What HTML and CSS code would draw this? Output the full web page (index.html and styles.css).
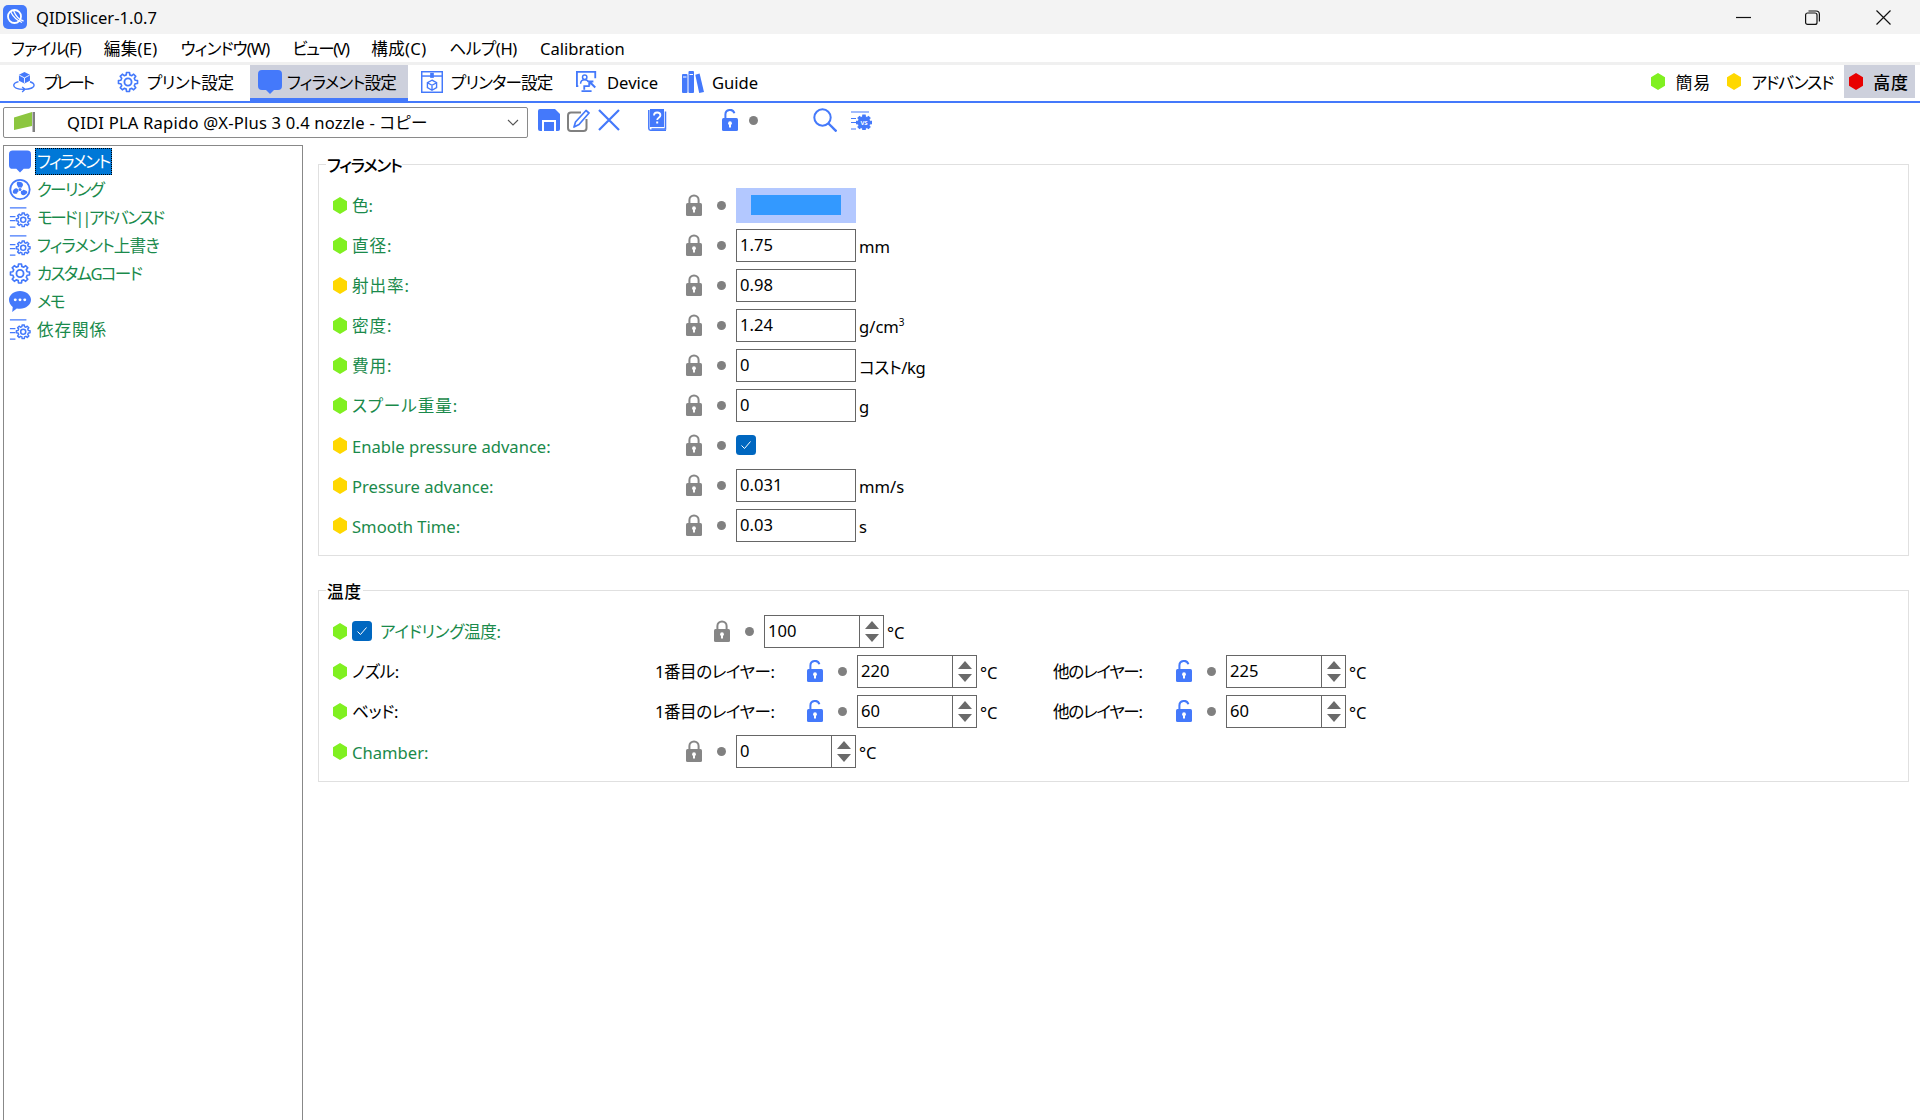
FILE: index.html
```html
<!DOCTYPE html>
<html>
<head>
    <meta charset="utf-8">
    <title>QIDISlicer-1.0.7</title>
    <link rel="stylesheet" href="styles.css">
</head>
<body>
<svg class="sprite" xmlns="http://www.w3.org/2000/svg">
    <defs>
        <polygon id="gear-shape" points="-1.94,-7.76 -1.64,-10.37 1.64,-10.37 1.94,-7.76 4.12,-6.86 6.17,-8.49 8.49,-6.17 6.86,-4.12 7.76,-1.94 10.37,-1.64 10.37,1.64 7.76,1.94 6.86,4.12 8.49,6.17 6.17,8.49 4.12,6.86 1.94,7.76 1.64,10.37 -1.64,10.37 -1.94,7.76 -4.12,6.86 -6.17,8.49 -8.49,6.17 -6.86,4.12 -7.76,1.94 -10.37,1.64 -10.37,-1.64 -7.76,-1.94 -6.86,-4.12 -8.49,-6.17 -6.17,-8.49 -4.12,-6.86"/>
    </defs>
    <symbol id="hex" viewBox="0 0 14 17"><polygon points="7,0 14,4.3 14,12.7 7,17 0,12.7 0,4.3"/></symbol>
    <symbol id="lock" viewBox="0 0 16 22">
        <path d="M3.4 10V6a4.6 4.6 0 0 1 9.2 0v4" fill="none" stroke="currentColor" stroke-width="2"/>
        <rect y="9" width="16" height="13" rx="1.5" fill="currentColor"/>
        <circle cx="8" cy="14.2" r="1.9" fill="#fff"/><rect x="7" y="14.5" width="2" height="4" fill="#fff"/>
    </symbol>
    <symbol id="unlock" viewBox="0 0 16 22">
        <path d="M3.4 10V5.6a4.6 4.6 0 0 1 9-1.4" fill="none" stroke="currentColor" stroke-width="2"/>
        <rect y="9" width="16" height="13" rx="1.5" fill="currentColor"/>
        <circle cx="8" cy="14.2" r="1.9" fill="#fff"/><rect x="7" y="14.5" width="2" height="4" fill="#fff"/>
    </symbol>
    <symbol id="gear" viewBox="-12 -12 24 24">
        <use href="#gear-shape" fill="none" stroke="currentColor" stroke-width="1.8" stroke-linejoin="round"/>
        <circle r="3.9" fill="none" stroke="currentColor" stroke-width="2"/>
    </symbol>
    <symbol id="mode" viewBox="0 0 24 24">
        <path d="M1 1.5h18M1 11h6M1 15.5h6M1 22.5h6" fill="none" stroke="currentColor" stroke-width="1.4"/>
        <g transform="translate(15.5 14.5) scale(.72)">
            <use href="#gear-shape" fill="none" stroke="currentColor" stroke-width="2.2" stroke-linejoin="round"/>
            <circle r="3.8" fill="none" stroke="currentColor" stroke-width="2.4"/>
        </g>
    </symbol>
    <symbol id="bubble" viewBox="0 0 24 24">
        <path d="M4 0h16a4 4 0 0 1 4 4v12a4 4 0 0 1-4 4h-4l-4 4-4-4H4a4 4 0 0 1-4-4V4a4 4 0 0 1 4-4z" fill="currentColor"/>
    </symbol>
    <symbol id="fan" viewBox="0 0 22 22">
        <circle cx="11" cy="11" r="9.7" fill="none" stroke="currentColor" stroke-width="1.8"/>
        <circle cx="11" cy="11" r="1.5" fill="currentColor"/>
        <path d="M8 3.8c2.500-1.200 6 0 6 2.400 0 1.500-1.200 2.300-1.800 3.200-.8-.6-1.800-.6-2.500-.1C8.800 8 7 6 8 3.800zM3.800 14.200c-.3-2.800 2-5.400 4.200-4.300 1.200.6 1.300 2 1.600 3-.9.400-1.400 1.200-1.500 2.100-1.500.2-3.200.6-4.300-.8zM18.400 13.800c-1 2.600-4.400 3.900-6 2-.9-1-.5-2.300-.4-3.300 1 0 1.800-.5 2.200-1.300 1.400.5 3.700.4 4.200 2.600z" fill="currentColor"/>
    </symbol>
    <symbol id="memo" viewBox="0 0 24 24">
        <path d="M12 .5c6.600 0 12 4.300 12 9.700s-5.400 9.800-12 9.800c-1.200 0-2.400-.1-3.500-.4L3.500 23.500l.6-5.400C1.600 16.200 0 13.400 0 10.200 0 4.800 5.400.5 12 .5z" fill="currentColor"/>
        <circle cx="6.800" cy="10.200" r="1.600" fill="#fff"/><circle cx="12" cy="10.200" r="1.600" fill="#fff"/><circle cx="17.200" cy="10.200" r="1.600" fill="#fff"/>
    </symbol>
    <symbol id="plate" viewBox="0 0 24 24">
        <path d="M12.500 1l6 3v6.500l-6 3-6-3V4z" fill="currentColor"/>
        <path d="M12.500 7.500V13M6.800 4.500l5.700 3 5.700-3" fill="none" stroke="#fff" stroke-width="1"/>
        <path d="M6 11.500C2.500 12.500.8 14 .8 15.500c0 2.800 5 4.500 11.200 4.500 6 0 11-1.700 11-4.500 0-1.400-1.500-2.800-4.500-3.800M10 17.500l3 2.500-3 2.800" fill="none" stroke="currentColor" stroke-width="1.500"/>
    </symbol>
    <symbol id="printer" viewBox="0 0 24 24">
        <rect x=".8" y=".8" width="22.400" height="22.400" fill="none" stroke="currentColor" stroke-width="1.600"/>
        <path d="M1 5.500h22" stroke="currentColor" stroke-width="1.600"/>
        <rect x="10" y="2" width="4" height="5.500" fill="currentColor"/>
        <path d="M12 10l5 2.800v5.400l-5 2.800-5-2.800v-5.400zM7 12.800l5 2.800 5-2.800M12 15.600V21" fill="none" stroke="currentColor" stroke-width="1.500"/>
    </symbol>
    <symbol id="device" viewBox="0 0 24 24">
        <path d="M2.500 16.500H1V1h20v7M15 16.500H9v4M6 22h11" fill="none" stroke="currentColor" stroke-width="2"/>
        <circle cx="9.500" cy="6.800" r="2.400" fill="none" stroke="currentColor" stroke-width="1.600"/>
        <path d="M5 14c0-3 2-4.500 4.500-4.500S13 10 13.500 12" fill="none" stroke="currentColor" stroke-width="1.600"/>
        <path d="M15 12l6 6M14.500 16v-4.500H19" fill="none" stroke="currentColor" stroke-width="2.200"/>
    </symbol>
    <symbol id="guide" viewBox="0 0 22 22">
        <rect y="3" width="5.500" height="19" rx="1" fill="currentColor"/>
        <rect x="6.500" width="5.500" height="22" rx="1" fill="currentColor"/>
        <path d="M13.300 3.800l4.300-1.300L22 21l-4.800 1z" fill="currentColor"/>
        <path d="M1 6h3.500M7.500 3.500H11" stroke="#fff" stroke-width="1"/>
    </symbol>
    <symbol id="save" viewBox="0 0 22 22">
        <path d="M2 0h15l5 5v15a2 2 0 0 1-2 2H2a2 2 0 0 1-2-2V2a2 2 0 0 1 2-2z" fill="currentColor"/>
        <rect x="4" y="11" width="14" height="11" fill="#fff"/>
        <rect x="6" y="13" width="10" height="9" fill="currentColor"/>
    </symbol>
    <symbol id="edit" viewBox="0 0 23 23">
        <path d="M14 3.500H4a3 3 0 0 0-3 3V19a3 3 0 0 0 3 3h12.500a3 3 0 0 0 3-3v-9" fill="none" stroke="#808080" stroke-width="2"/>
        <path d="M19 1.500l3 2.500L12 15.500l-5 2.500 1.500-5z" fill="#fff" stroke="#4479fb" stroke-width="1.700" stroke-linejoin="round"/>
    </symbol>
    <symbol id="close-x" viewBox="0 0 22 22">
        <path d="M1 1l20 20M21 1L1 21" fill="none" stroke="currentColor" stroke-width="2.200"/>
    </symbol>
    <symbol id="help" viewBox="0 0 20 22">
        <path d="M2 0h14v18H2z" fill="currentColor"/>
        <path d="M17.500 2.500v17.500H3.500" fill="none" stroke="currentColor" stroke-width="1.500"/>
        <path d="M.8 1v18.500c0 1 .7 1.700 1.700 1.700H18" fill="none" stroke="currentColor" stroke-width="1.500"/>
        <path d="M6 6.500c0-1.800 1.400-3 3.200-3s3.200 1.100 3.200 2.800c0 2.500-3.200 2.400-3.200 4.700" fill="none" stroke="#fff" stroke-width="1.800"/>
        <rect x="8.200" y="12.500" width="2" height="2" fill="#fff"/>
    </symbol>
    <symbol id="search" viewBox="0 0 24 24">
        <circle cx="9.500" cy="9.500" r="8.200" fill="none" stroke="currentColor" stroke-width="2"/>
        <path d="M15.500 15.500l8 8" stroke="currentColor" stroke-width="2.400"/>
    </symbol>
    <symbol id="app-logo" viewBox="0 0 24 24">
        <rect width="24" height="24" rx="5" fill="#4479fb"/>
        <circle cx="11.500" cy="11.500" r="6.500" fill="none" stroke="#fff" stroke-width="1.800"/>
        <path d="M7.500 6.500c2.500 5 6.500 9 11.500 11M10.500 5.500c2 5 5.500 9.500 10 10.500" fill="none" stroke="#fff" stroke-width="1.300"/>
    </symbol>
    <symbol id="flag" viewBox="0 0 22 20">
        <path d="M0 5.500L18 0v14L0 18z" fill="#8cc63f"/>
        <rect x="18.500" width="2.500" height="20" fill="#808080"/>
    </symbol>
</svg>

<div class="app">
    <div class="titlebar">
        <svg class="app-logo"><use href="#app-logo"/></svg>
        <span class="title-text">QIDISlicer-1.0.7</span>
        <div class="win-buttons">
            <svg class="win-btn win-min" viewBox="0 0 15 15"><path d="M0 7.500h15" stroke="#111" stroke-width="1.200"/></svg>
            <svg class="win-btn" viewBox="0 0 15 15"><rect x=".6" y="3" width="11.400" height="11.400" rx="2" fill="none" stroke="#111" stroke-width="1.200"/><path d="M3.500 1h7.500a3.400 3.400 0 0 1 3.400 3.400V11.500" fill="none" stroke="#111" stroke-width="1.200"/></svg>
            <svg class="win-btn" viewBox="0 0 15 15"><path d="M.5.500l14 14M14.500.500l-14 14" stroke="#111" stroke-width="1.200"/></svg>
        </div>
    </div>

    <div class="menubar">
        <span class="sp-n9">ファイル(F)</span>
        <span class="sp-p3">編集(E)</span>
        <span class="sp-n9">ウィンドウ(W)</span>
        <span class="sp-n16">ビュー(V)</span>
        <span class="sp-p3">構成(C)</span>
        <span class="sp-n4">ヘルプ(H)</span>
        <span>Calibration</span>
    </div>

    <div class="tabbar">
        <div class="tab tab-plate"><svg class="tab-icon"><use href="#plate"/></svg><span class="sp-n27">プレート</span></div>
        <div class="tab tab-print"><svg class="tab-icon"><use href="#gear"/></svg><span class="sp-n5">プリント設定</span></div>
        <div class="tab tab-active"><svg class="tab-icon"><use href="#bubble"/></svg><span class="sp-n8">フィラメント設定</span></div>
        <div class="tab tab-printer"><svg class="tab-icon"><use href="#printer"/></svg><span class="sp-n9">プリンター設定</span></div>
        <div class="tab tab-device"><svg class="tab-icon"><use href="#device"/></svg>Device</div>
        <div class="tab tab-guide"><svg class="tab-icon"><use href="#guide"/></svg>Guide</div>
        <div class="modes">
            <div class="mode"><svg class="hex hex-green"><use href="#hex"/></svg><span class="sp-p9">簡易</span></div>
            <div class="mode"><svg class="hex hex-yellow"><use href="#hex"/></svg><span class="sp-n13">アドバンスド</span></div>
            <div class="mode mode-active"><svg class="hex hex-red"><use href="#hex"/></svg><span class="sp-p9">高度</span></div>
        </div>
    </div>

    <div class="toolbar">
        <div class="preset">
            <svg class="preset-flag"><use href="#flag"/></svg>
            <span class="preset-name">QIDI PLA Rapido @X-Plus 3 0.4 nozzle - コピー</span>
            <svg class="preset-caret" viewBox="0 0 12 7"><path d="M1 1l5 5 5-5" fill="none" stroke="#555" stroke-width="1.100"/></svg>
        </div>
        <svg class="tool tool-save"><use href="#save"/></svg>
        <svg class="tool tool-edit"><use href="#edit"/></svg>
        <svg class="tool tool-x"><use href="#close-x"/></svg>
        <svg class="tool tool-help"><use href="#help"/></svg>
        <svg class="tool tool-lock"><use href="#unlock"/></svg>
        <span class="dot tool-dot"></span>
        <svg class="tool tool-search"><use href="#search"/></svg>
        <svg class="tool tool-vs" viewBox="0 0 22 19">
            <path d="M1 1h18M1 7.500h5M1 11.500h5M1 18h5" fill="none" stroke="currentColor" stroke-width="1.200"/>
            <g transform="translate(14 11.500) scale(.72)"><use href="#gear-shape" fill="currentColor" stroke="currentColor" stroke-width="1.500"/></g>
            <text x="14" y="13.700" class="vs-text" text-anchor="middle">VS</text>
        </svg>
    </div>

    <div class="main">
        <div class="sidebar">
            <div class="side-item"><svg class="side-icon"><use href="#bubble"/></svg><span class="side-text selected sp-n16">フィラメント</span></div>
            <div class="side-item"><svg class="side-icon"><use href="#fan"/></svg><span class="side-text sp-n17">クーリング</span></div>
            <div class="side-item"><svg class="side-icon"><use href="#mode"/></svg><span class="side-text sp-n23">モード||アドバンスド</span></div>
            <div class="side-item"><svg class="side-icon"><use href="#mode"/></svg><span class="side-text sp-n9">フィラメント上書き</span></div>
            <div class="side-item"><svg class="side-icon"><use href="#gear"/></svg><span class="side-text sp-n17">カスタムGコード</span></div>
            <div class="side-item"><svg class="side-icon"><use href="#memo"/></svg><span class="side-text sp-n17">メモ</span></div>
            <div class="side-item"><svg class="side-icon"><use href="#mode"/></svg><span class="side-text sp-p9">依存関係</span></div>
        </div>

        <div class="content">
            <div class="group">
                <div class="group-title sp-n13">フィラメント</div>
                <div class="row">
                    <svg class="hex hex-green"><use href="#hex"/></svg><span class="label">色:</span>
                    <svg class="lock"><use href="#lock"/></svg><span class="dot"></span>
                    <div class="swatch"><div class="swatch-color"></div></div>
                </div>
                <div class="row">
                    <svg class="hex hex-green"><use href="#hex"/></svg><span class="label sp-p9">直径:</span>
                    <svg class="lock"><use href="#lock"/></svg><span class="dot"></span>
                    <div class="field">1.75</div><span class="unit">mm</span>
                </div>
                <div class="row">
                    <svg class="hex hex-yellow"><use href="#hex"/></svg><span class="label sp-p9">射出率:</span>
                    <svg class="lock"><use href="#lock"/></svg><span class="dot"></span>
                    <div class="field">0.98</div>
                </div>
                <div class="row">
                    <svg class="hex hex-green"><use href="#hex"/></svg><span class="label sp-p9">密度:</span>
                    <svg class="lock"><use href="#lock"/></svg><span class="dot"></span>
                    <div class="field">1.24</div><span class="unit">g/cm<sup>3</sup></span>
                </div>
                <div class="row">
                    <svg class="hex hex-green"><use href="#hex"/></svg><span class="label sp-p9">費用:</span>
                    <svg class="lock"><use href="#lock"/></svg><span class="dot"></span>
                    <div class="field">0</div><span class="unit sp-n4">コスト/kg</span>
                </div>
                <div class="row">
                    <svg class="hex hex-green"><use href="#hex"/></svg><span class="label sp-p9">スプール重量:</span>
                    <svg class="lock"><use href="#lock"/></svg><span class="dot"></span>
                    <div class="field">0</div><span class="unit">g</span>
                </div>
                <div class="row">
                    <svg class="hex hex-yellow"><use href="#hex"/></svg><span class="label label-latin">Enable pressure advance:</span>
                    <svg class="lock"><use href="#lock"/></svg><span class="dot"></span>
                    <svg class="check" viewBox="0 0 20 20"><rect width="20" height="20" rx="3.500" fill="#0067c0"/><path d="M5.500 10.500l3 3 6-7" fill="none" stroke="#fff" stroke-width="1"/></svg>
                </div>
                <div class="row">
                    <svg class="hex hex-yellow"><use href="#hex"/></svg><span class="label label-latin">Pressure advance:</span>
                    <svg class="lock"><use href="#lock"/></svg><span class="dot"></span>
                    <div class="field">0.031</div><span class="unit">mm/s</span>
                </div>
                <div class="row">
                    <svg class="hex hex-yellow"><use href="#hex"/></svg><span class="label label-latin">Smooth Time:</span>
                    <svg class="lock"><use href="#lock"/></svg><span class="dot"></span>
                    <div class="field">0.03</div><span class="unit">s</span>
                </div>
            </div>

            <div class="group">
                <div class="group-title sp-p9">温度</div>
                <div class="row">
                    <svg class="hex hex-green"><use href="#hex"/></svg>
                    <svg class="check check-idle" viewBox="0 0 20 20"><rect width="20" height="20" rx="3.500" fill="#0067c0"/><path d="M5.500 10.500l3 3 6-7" fill="none" stroke="#fff" stroke-width="1"/></svg>
                    <span class="label label-idle sp-n3">アイドリング温度:</span>
                    <svg class="lock"><use href="#lock"/></svg><span class="dot"></span>
                    <div class="field spin">100<span class="spin-btns"><i class="up"></i><i class="down"></i></span></div><span class="unit">°C</span>
                </div>
                <div class="row">
                    <svg class="hex hex-green"><use href="#hex"/></svg><span class="label label-short sp-n4">ノズル:</span>
                    <span class="sublabel sp-n5">1番目のレイヤー:</span>
                    <svg class="lock lock-blue"><use href="#unlock"/></svg><span class="dot"></span>
                    <div class="field spin">220<span class="spin-btns"><i class="up"></i><i class="down"></i></span></div><span class="unit unit-fixed">°C</span>
                    <span class="sublabel sublabel-other sp-n13">他のレイヤー:</span>
                    <svg class="lock lock-blue"><use href="#unlock"/></svg><span class="dot"></span>
                    <div class="field spin">225<span class="spin-btns"><i class="up"></i><i class="down"></i></span></div><span class="unit">°C</span>
                </div>
                <div class="row">
                    <svg class="hex hex-green"><use href="#hex"/></svg><span class="label label-short sp-n4">ベッド:</span>
                    <span class="sublabel sp-n5">1番目のレイヤー:</span>
                    <svg class="lock lock-blue"><use href="#unlock"/></svg><span class="dot"></span>
                    <div class="field spin">60<span class="spin-btns"><i class="up"></i><i class="down"></i></span></div><span class="unit unit-fixed">°C</span>
                    <span class="sublabel sublabel-other sp-n13">他のレイヤー:</span>
                    <svg class="lock lock-blue"><use href="#unlock"/></svg><span class="dot"></span>
                    <div class="field spin">60<span class="spin-btns"><i class="up"></i><i class="down"></i></span></div><span class="unit">°C</span>
                </div>
                <div class="row">
                    <svg class="hex hex-green"><use href="#hex"/></svg><span class="label label-latin">Chamber:</span>
                    <svg class="lock"><use href="#lock"/></svg><span class="dot"></span>
                    <div class="field spin">0<span class="spin-btns"><i class="up"></i><i class="down"></i></span></div><span class="unit">°C</span>
                </div>
            </div>
        </div>
    </div>
</div>
</body>
</html>
```

FILE: styles.css
```css
* {
  box-sizing: border-box;
}

body {
  margin: 0;
  background: #fff;
  color: #000;
  font-family: "Noto Sans", "Noto Sans CJK JP", sans-serif;
  font-size: 16.6px;
  font-feature-settings: "palt";
  overflow: hidden;
}

svg {
  flex: none;
  display: block;
}

.sprite {
  width: 0;
  height: 0;
  position: absolute;
}

.sp-p9 { letter-spacing: .9px; }
.sp-p3 { letter-spacing: .3px; }
.sp-n3 { letter-spacing: -.3px; }
.sp-n4 { letter-spacing: -.4px; }
.sp-n5 { letter-spacing: -.5px; }
.sp-n8 { letter-spacing: -.8px; }
.sp-n9 { letter-spacing: -.9px; }
.sp-n13 { letter-spacing: -1.3px; }
.sp-n16 { letter-spacing: -1.6px; }
.sp-n17 { letter-spacing: -1.7px; }
.sp-n23 { letter-spacing: -2.3px; }
.sp-n27 { letter-spacing: -2.7px; }

.vs-text {
  font-size: 6px;
  font-weight: 700;
  fill: #fff;
}

.app {
  height: 1120px;
  display: flex;
  flex-direction: column;
}

/* Title bar */
.titlebar {
  height: 34px;
  flex: none;
  display: flex;
  align-items: center;
  background: #f3f3f3;
  padding-left: 3px;
}

.app-logo {
  width: 24px;
  height: 24px;
}

.title-text {
  margin-left: 9px;
}

.win-buttons {
  margin-left: auto;
  display: flex;
  gap: 56px;
  padding-right: 29px;
}

.win-btn {
  width: 15px;
  height: 15px;
}

.win-min {
  margin-right: -2px;
}

/* Menu */
.menubar {
  height: 31px;
  flex: none;
  display: flex;
  align-items: center;
  gap: 23px;
  padding: 0 0 0 11px;
  border-bottom: 3px solid #f0f0f0;
}

/* Tabs */
.tabbar {
  height: 38px;
  flex: none;
  display: flex;
  border-bottom: 2px solid #4479fb;
  color: #000;
  padding-left: 13px;
}

.tab {
  display: flex;
  align-items: center;
  padding-bottom: 2px;
}

.tab-icon {
  width: 22px;
  height: 24px;
  margin-right: 8px;
  color: #4479fb;
}

.tab-plate {
  width: 104px;
}

.tab-plate .tab-icon,
.tab-device .tab-icon {
  margin-right: 9px;
}

.tab-print {
  width: 133px;
}

.tab-active {
  width: 158px;
  padding: 0 0 0 8px;
  background: #cdd0dc;
  border-bottom: 3px solid #4479fb;
}

.tab-active .tab-icon {
  width: 24px;
  margin-right: 5px;
}

.tab-printer {
  width: 168px;
  padding-left: 13px;
}

.tab-device {
  width: 106px;
}

.modes {
  margin-left: auto;
  display: flex;
  padding-right: 5px;
  font-size: 17px;
}

.mode {
  display: flex;
  align-items: center;
  padding-left: 5px;
  padding-right: 11px;
  height: 33px;
}

.mode .hex {
  margin-right: 10px;
}

.mode-active {
  padding-right: 6px;
  background: #cdd0dc;
  font-weight: 500;
}

/* Preset toolbar */
.toolbar {
  height: 42px;
  flex: none;
  display: flex;
  align-items: center;
  padding: 0 0 4px 3px;
  color: #4479fb;
}

.preset {
  width: 525px;
  height: 31px;
  display: flex;
  align-items: center;
  border: 1px solid #8a8a8a;
  border-radius: 2px;
  padding: 0 8px 0 10px;
  color: #000;
}

.preset-flag {
  width: 22px;
  height: 20px;
}

.preset-name {
  margin-left: 31px;
  letter-spacing: .2px;
}

.preset-caret {
  width: 12px;
  height: 7px;
  margin-left: auto;
}

.tool {
  width: 22px;
  height: 22px;
  margin-bottom: 4px;
}

.tool-save {
  margin-left: 10px;
}

.tool-edit {
  margin-left: 7px;
  width: 23px;
  height: 23px;
}

.tool-x {
  margin-left: 8px;
}

.tool-help {
  width: 20px;
  margin-left: 28px;
}

.tool-lock {
  width: 16px;
  margin-left: 54px;
}

.toolbar .tool-dot {
  margin: 0 0 4px 11px;
}

.tool-search {
  width: 24px;
  height: 24px;
  margin-left: 55px;
}

.tool-vs {
  width: 22px;
  height: 19px;
  margin-left: 13px;
}

/* Left tree */
.main {
  flex: 1;
  display: flex;
  min-height: 0;
  padding-left: 3px;
}

.sidebar {
  width: 300px;
  flex: none;
  border: 1px solid #888;
  border-bottom: none;
  padding: 1px 0 0 5px;
}

.side-item {
  height: 28.100px;
  display: flex;
  align-items: center;
}

.side-icon {
  width: 22px;
  height: 23px;
  color: #4479fb;
}

.side-text {
  margin-left: 4px;
  padding: 0 2px;
  line-height: 27px;
  color: #1a8a4b;
}

.selected {
  background: #0078d7;
  color: #fff;
  outline: 1px dotted #000;
  outline-offset: -1px;
}

/* Option groups */
.content {
  flex: 1;
  padding: 19px 11px 0 15px;
  display: flex;
  flex-direction: column;
  gap: 34px;
}

.group {
  position: relative;
  border: 1px solid #e0e0e0;
  padding: 20px 0 10px 14px;
}

.group-title {
  position: absolute;
  top: -12px;
  left: 7px;
  padding: 0 1px;
  background: #fff;
  font-weight: 500;
}

.row {
  height: 40px;
  display: flex;
  align-items: center;
}

.hex {
  width: 14px;
  height: 17px;
}

.hex-green {
  fill: #80f020;
}

.hex-yellow {
  fill: #ffd800;
}

.hex-red {
  fill: #e80000;
}

.label {
  width: 339px;
  padding-left: 5px;
  color: #1a8a4b;
}

.label-latin {
  padding-top: 2px;
}

.label-idle {
  width: 342px;
  padding-left: 8px;
}

.label-short {
  width: 308px;
  color: #000;
}

.check-idle {
  margin-left: 5px;
}

.sublabel {
  width: 152px;
}

.sublabel-other {
  width: 123px;
}

.lock {
  width: 16px;
  height: 22px;
  color: #868686;
}

.lock-blue {
  color: #4479fb;
}

.dot {
  flex: none;
  width: 9px;
  height: 9px;
  margin: 0 10px 0 15px;
  border-radius: 50%;
  background: #808080;
}

.swatch {
  width: 120px;
  height: 35px;
  padding: 7px 15px 8px;
  background: #b3c8ff;
}

.swatch-color {
  height: 100%;
  background: #3399ff;
}

.field {
  width: 120px;
  height: 33px;
  border: 1px solid #666;
  padding: 0 0 2px 3px;
  display: flex;
  align-items: center;
}

.spin {
  position: relative;
}

.spin-btns {
  position: absolute;
  top: 0;
  right: 0;
  bottom: 0;
  width: 24px;
  border-left: 1px solid #666;
}

.spin-btns i {
  position: absolute;
  left: 5px;
  border-left: 7px solid transparent;
  border-right: 7px solid transparent;
}

.spin-btns .up {
  top: 5px;
  border-bottom: 8px solid #6a6a6a;
}

.spin-btns .down {
  bottom: 5px;
  border-top: 8px solid #6a6a6a;
}

.unit {
  margin-left: 3px;
  padding-top: 3px;
}

.unit-fixed {
  width: 73px;
}

.unit sup {
  font-size: 10px;
  line-height: 0;
}

.check {
  width: 20px;
  height: 20px;
}
```
